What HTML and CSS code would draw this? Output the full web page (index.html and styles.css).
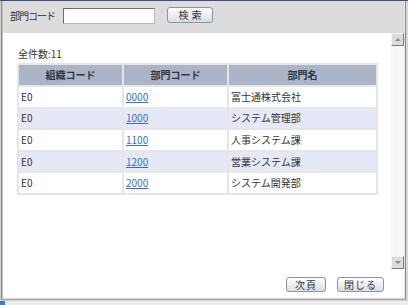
FILE: index.html
```html
<!DOCTYPE html>
<html lang="ja">
<head>
<meta charset="utf-8">
<title>部門検索</title>
<link rel="stylesheet" href="styles.css">
</head>
<body>
<div class="window">
  <div class="topline"></div>
  <div class="frame">
    <div class="panel">
      <div class="inner">
        <div class="searchbar">
          <label class="search-label" for="dept">部門コード</label>
          <input class="search-input" id="dept" type="text">
          <button class="btn btn-search" type="button">検索</button>
        </div>
        <div class="main">
          <div class="content">
            <div class="count">全件数:11</div>
            <table class="grid">
              <colgroup>
                <col class="c1"><col class="c2"><col class="c3">
              </colgroup>
              <thead>
                <tr><th>組織コード</th><th>部門コード</th><th>部門名</th></tr>
              </thead>
              <tbody>
                <tr><td>E0</td><td><a href="#">0000</a></td><td>富士通株式会社</td></tr>
                <tr class="alt"><td>E0</td><td><a href="#">1000</a></td><td>システム管理部</td></tr>
                <tr><td>E0</td><td><a href="#">1100</a></td><td>人事システム課</td></tr>
                <tr class="alt"><td>E0</td><td><a href="#">1200</a></td><td>営業システム課</td></tr>
                <tr><td>E0</td><td><a href="#">2000</a></td><td>システム開発部</td></tr>
              </tbody>
            </table>
          </div>
          <div class="scrollbar">
            <div class="sb-btn sb-up"><span class="tri-up"></span></div>
            <div class="sb-track"></div>
            <div class="sb-btn sb-down"><span class="tri-down"></span></div>
          </div>
        </div>
        <div class="footer">
          <button class="btn btn-next" type="button">次頁</button>
          <button class="btn btn-close" type="button">閉じる</button>
        </div>
      </div>
    </div>
  </div>
  <div class="strip"><span class="strip-mark"></span></div>
</div>
</body>
</html>
```

FILE: styles.css
```css
html, body {
  margin: 0;
  padding: 0;
}

body {
  width: 408px;
  height: 305px;
  overflow: hidden;
  background: #ffffff;
  font-family: "Noto Sans CJK JP", "Noto Sans", sans-serif;
  font-size: 10px;
  color: #333333;
}

.window {
  width: 408px;
  height: 305px;
  display: flex;
  flex-direction: column;
}

.topline {
  height: 1px;
  background: #3d4f88;
  flex: none;
}

.frame {
  flex: none;
  border-left: 1px solid #d2d2d2;
  border-right: 2px solid #d8d8d8;
  border-bottom: 1px solid #d0d0d0;
}

.panel {
  border-left: 1px solid #8c8c8c;
  border-right: 1px solid #8c8c8c;
  border-bottom: 1px solid #a8a8a8;
}

.inner {
  border-left: 1px solid #c4c4c4;
  border-right: 1px solid #e4e4e4;
  border-bottom: 1px solid #d8d8d8;
  background: #ffffff;
}

/* search bar */
.searchbar {
  height: 32px;
  box-sizing: border-box;
  background: #dcdcdc;
  display: flex;
  align-items: flex-start;
  padding: 6px 0 0 7px;
}

.search-label {
  flex: none;
  width: 53px;
  line-height: 18px;
  letter-spacing: -1px;
  color: #333;
}

.search-input {
  flex: none;
  width: 92px;
  height: 16px;
  box-sizing: border-box;
  margin: 1px 0 0 0;
  padding: 0 2px;
  border: 1px solid #8a8a8a;
  border-top-color: #6e6e6e;
  border-left-color: #6e6e6e;
  border-bottom-color: #b8b8b8;
  border-right-color: #b8b8b8;
  background: #fff;
  font: inherit;
}

.btn {
  flex: none;
  box-sizing: border-box;
  height: 16px;
  padding: 0;
  border: 1px solid #8f939b;
  border-radius: 3px;
  background: linear-gradient(#ffffff, #e9ebf1 60%, #d9dde6);
  font-family: inherit;
  font-size: 10px;
  line-height: 14px;
  color: #333;
  letter-spacing: 1px;
}

.btn-search {
  width: 46px;
  margin-left: 12px;
  margin-top: 0;
  letter-spacing: 3px;
  text-indent: 3px;
}

/* main area */
.main {
  display: flex;
  height: 236px;
}

.content {
  flex: none;
  width: 388px;
  box-sizing: border-box;
  padding: 14px 0 0 14px;
}

.count {
  line-height: 14px;
  padding-left: 1px;
  margin-bottom: 2px;
}

.grid {
  width: 359px;
  border-collapse: collapse;
  table-layout: fixed;
  border: 2px solid #e6e6e6;
}

.grid .c1 { width: 105px; }
.grid .c2 { width: 105px; }
.grid .c3 { width: 149px; }

.grid th,
.grid td {
  border: 2px solid #e6e6e6;
  padding: 0 0 0 2px;
  height: 19.6px;
  line-height: 14px;
  text-align: left;
  white-space: nowrap;
}

.grid th {
  height: 20px;
  background: #acb5c7;
  color: #2e3440;
  font-weight: bold;
  text-align: center;
  padding: 0;
}

.grid td {
  background: #ffffff;
}

.grid tr.alt td {
  background: #e6e9f5;
}

.grid a {
  color: #3a6fc4;
  text-decoration: underline;
}

/* scrollbar */
.scrollbar {
  flex: none;
  width: 13px;
  display: flex;
  flex-direction: column;
}

.sb-btn {
  flex: none;
  height: 13px;
  box-sizing: border-box;
  background: #dcdcdc;
  border: 1px solid;
  border-color: #f4f4f4 #7c7c7c #7c7c7c #f4f4f4;
  display: flex;
  align-items: center;
  justify-content: center;
}

.sb-track {
  flex: 1;
  background: repeating-conic-gradient(#eeeeee 0 25%, #ffffff 0 50%) 0 0 / 2px 2px;
}

.tri-up {
  width: 0;
  height: 0;
  border-left: 3px solid transparent;
  border-right: 3px solid transparent;
  border-bottom: 3px solid #8a8a8a;
}

.tri-down {
  width: 0;
  height: 0;
  border-left: 3px solid transparent;
  border-right: 3px solid transparent;
  border-top: 3px solid #8a8a8a;
}

/* footer */
.footer {
  height: 29px;
  box-sizing: border-box;
  display: flex;
  justify-content: flex-end;
  align-items: flex-start;
  gap: 11px;
  padding: 8px 20px 0 0;
}

.footer .btn {
  height: 15px;
  line-height: 13px;
}

.btn-next { width: 40px; }
.btn-close { width: 47px; }

/* bottom strip */
.strip {
  flex: 1;
  background: #ececec;
  display: flex;
}

.strip-mark {
  width: 5px;
  background: #4a78b8;
}
```
